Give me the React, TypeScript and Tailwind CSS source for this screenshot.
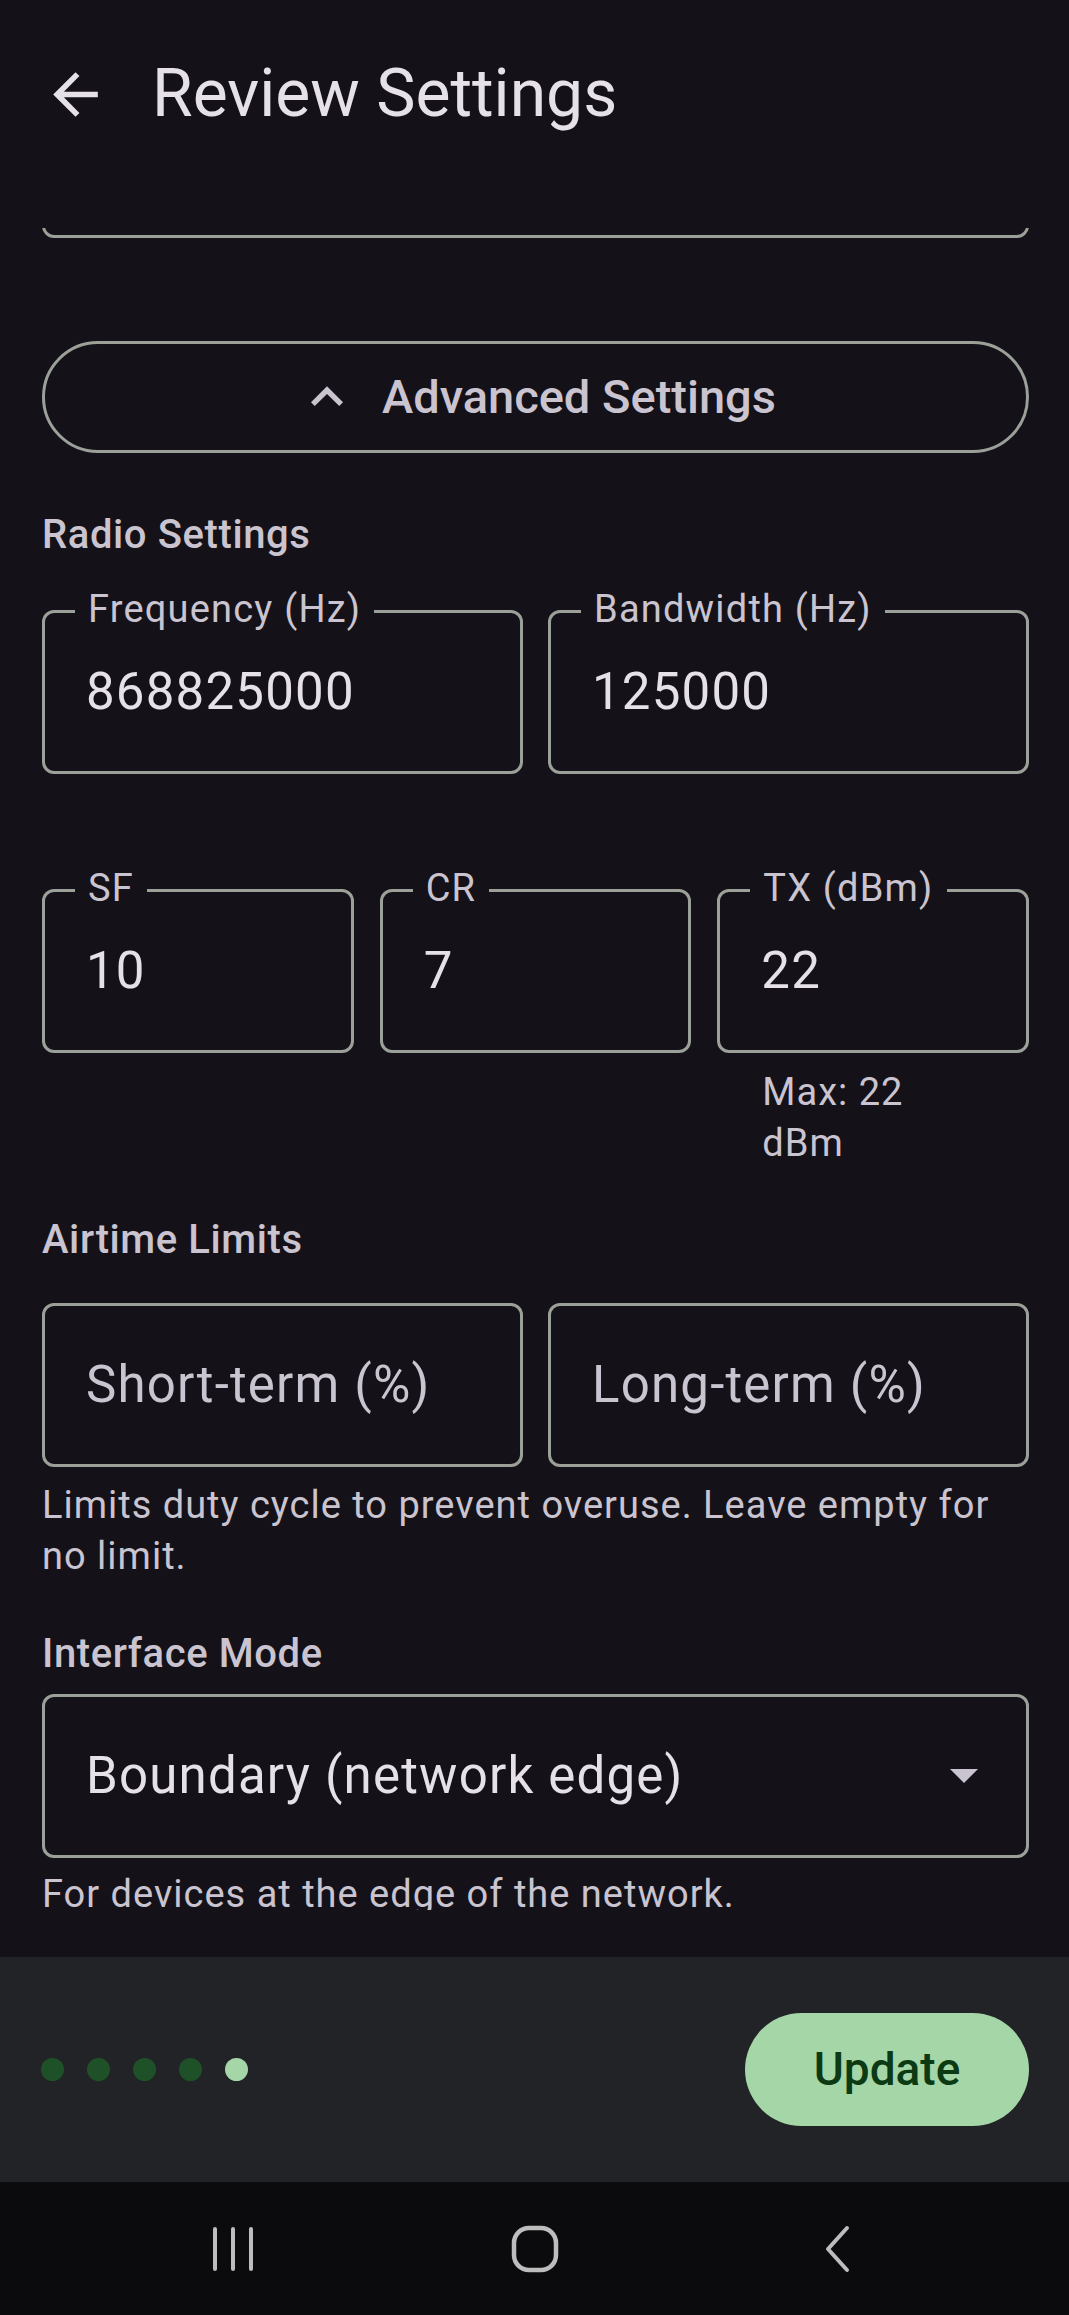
import React from 'react';

// Outlined text field, Material 3 look
const Field: React.FC<{ label?: string; value?: string; placeholder?: string }> = ({
  label,
  value,
  placeholder,
}) => (
  <div className="relative h-[164px] rounded-[12px] border-[3px] border-[#9ba198] flex items-center pl-[41px]">
    {label && (
      <span className="absolute left-[30px] -top-[26px] px-[13px] bg-[#141218] text-[38px] leading-[44px] tracking-[1.2px] text-[#cac4d0]">
        {label}
      </span>
    )}
    {value ? (
      <span className="text-[51px] leading-[60px] tracking-[1.2px] text-[#e6e0e9]">{value}</span>
    ) : (
      <span className="text-[51px] leading-[60px] tracking-[1.2px] text-[#cac4d0]">{placeholder}</span>
    )}
  </div>
);

const SectionLabel: React.FC<{ children: React.ReactNode; className?: string }> = ({ children, className }) => (
  <div className={`text-[40px] leading-[50px] font-medium tracking-[0.6px] text-[#cac4d0] ${className ?? ''}`}>
    {children}
  </div>
);

const Helper: React.FC<{ children: React.ReactNode; className?: string }> = ({ children, className }) => (
  <div className={`text-[38px] leading-[51px] tracking-[1px] text-[#cac4d0] ${className ?? ''}`}>{children}</div>
);

const App: React.FC = () => {
  const steps = [0, 1, 2, 3, 4];

  return (
    <div className="h-[2315px] w-full flex flex-col bg-[#141218] font-['Roboto',sans-serif] overflow-hidden">
      {/* Top app bar */}
      <div className="h-[228px] shrink-0">
        <div className="h-[188px] flex items-center pl-[42px]">
          <svg width="67" height="67" viewBox="0 0 24 24" fill="#e6e0e9">
            <path d="M20 11H7.83l5.59-5.59L12 4l-8 8 8 8 1.41-1.41L7.83 13H20v-2z" />
          </svg>
          <h1 className="ml-[43px] text-[66px] leading-[80px] text-[#e6e0e9]">Review Settings</h1>
        </div>
      </div>

      {/* Scrolled content */}
      <div className="h-[1682px] shrink-0 overflow-hidden pl-[42px] pr-[40px] flex flex-col">
        <div className="h-[164px] -mt-[154px] shrink-0 rounded-[12px] border-[3px] border-[#9ba198]" />

        <button className="mt-[103px] h-[112px] shrink-0 w-full rounded-full border-[3px] border-[#9ba198] flex items-center justify-center gap-[23px]">
          <svg width="64" height="64" viewBox="0 0 24 24" fill="#cac4d0">
            <path d="M12 8l-6 6 1.41 1.41L12 10.83l4.59 4.58L18 14z" />
          </svg>
          <span className="text-[47px] font-medium text-[#cac4d0]">Advanced Settings</span>
        </button>

        <SectionLabel className="mt-[57px]">Radio Settings</SectionLabel>

        <div className="mt-[50px] grid grid-cols-2 gap-[25px]">
          <Field label="Frequency (Hz)" value="868825000" />
          <Field label="Bandwidth (Hz)" value="125000" />
        </div>

        <div className="mt-[115px] grid grid-cols-3 gap-[26px]">
          <Field label="SF" value="10" />
          <Field label="CR" value="7" />
          <Field label="TX (dBm)" value="22" />
        </div>
        <div className="mt-[14px] grid grid-cols-3 gap-[26px]">
          <div />
          <div />
          <Helper className="pl-[45px]">
            Max: 22
            <br />
            dBm
          </Helper>
        </div>

        <SectionLabel className="mt-[46px]">Airtime Limits</SectionLabel>

        <div className="mt-[38px] grid grid-cols-2 gap-[25px]">
          <Field placeholder="Short-term (%)" />
          <Field placeholder="Long-term (%)" />
        </div>
        <Helper className="mt-[13px]">Limits duty cycle to prevent overuse. Leave empty for no limit.</Helper>

        <SectionLabel className="mt-[47px]">Interface Mode</SectionLabel>

        <div className="mt-[15px] h-[164px] shrink-0 rounded-[12px] border-[3px] border-[#9ba198] flex items-center justify-between pl-[41px] pr-[48px]">
          <span className="text-[51px] leading-[60px] tracking-[1.2px] text-[#e6e0e9]">Boundary (network edge)</span>
          <svg width="28" height="14" viewBox="0 0 28 14">
            <path d="M0 0h28L14 14z" fill="#cac4d0" />
          </svg>
        </div>
        <Helper className="mt-[11px]">For devices at the edge of the network.</Helper>
      </div>

      <div className="h-[47px] shrink-0" />

      {/* Bottom bar with step dots */}
      <div className="h-[225px] shrink-0 bg-[#212326] flex items-center justify-between pl-[41px] pr-[40px]">
        <div className="flex gap-[23px]">
          {steps.map((i) => (
            <span
              key={i}
              className={
                i === 4
                  ? 'w-[23px] h-[23px] rounded-full bg-[#a5d6a7]'
                  : 'w-[23px] h-[23px] rounded-full bg-[#1e5128]'
              }
            />
          ))}
        </div>
        <button className="w-[284px] h-[113px] rounded-full bg-[#a5d6a7] text-[46px] font-medium text-[#0b3a13]">
          Update
        </button>
      </div>

      {/* System navigation bar */}
      <div className="h-[133px] shrink-0 bg-[#0b0b0d] flex items-center justify-center gap-[182px]">
        <div className="w-[120px] flex justify-center">
          <svg width="48" height="48" viewBox="0 0 48 48" fill="none" stroke="#bdbdbd" strokeWidth="4" strokeLinecap="round">
            <path d="M6 4v40M24 4v40M42 4v40" />
          </svg>
        </div>
        <div className="w-[120px] flex justify-center">
          <svg width="48" height="48" viewBox="0 0 48 48" fill="none" stroke="#bdbdbd" strokeWidth="4.5">
            <rect x="3" y="3" width="42" height="42" rx="15" />
          </svg>
        </div>
        <div className="w-[120px] flex justify-center">
          <svg width="48" height="48" viewBox="0 0 48 48" fill="none" stroke="#bdbdbd" strokeWidth="4" strokeLinecap="round" strokeLinejoin="round">
            <path d="M34 3L15 24l19 21" />
          </svg>
        </div>
      </div>
    </div>
  );
};

export default App;
